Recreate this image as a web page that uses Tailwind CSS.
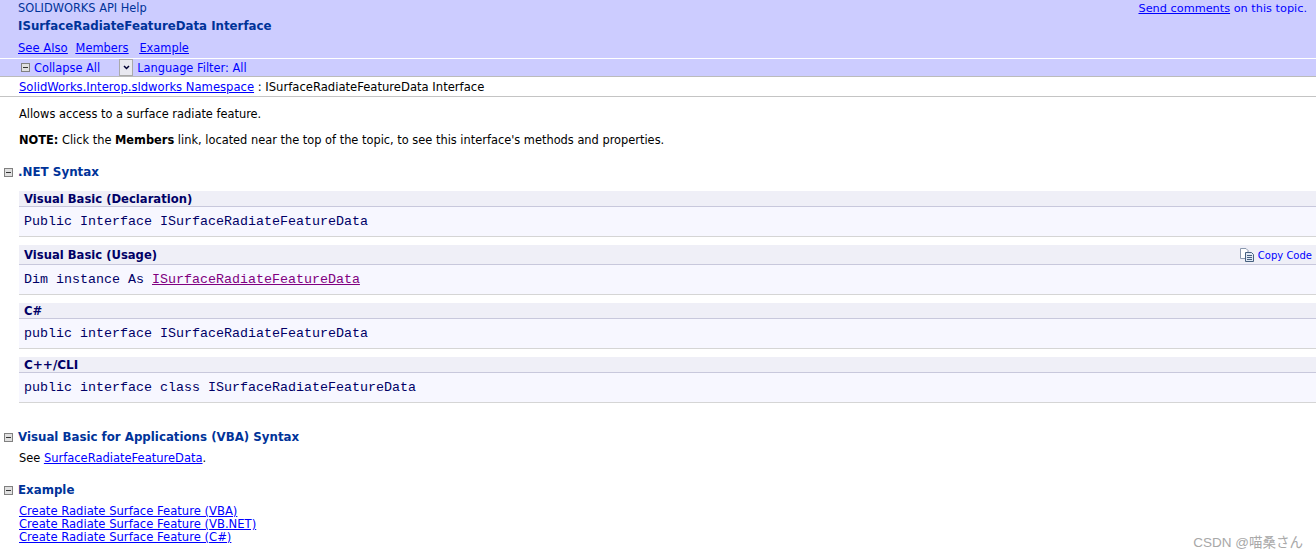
<!DOCTYPE html>
<html lang="en">
<head>
  <meta charset="UTF-8">
  <title>ISurfaceRadiateFeatureData Interface</title>
  <script src="https://cdn.jsdelivr.net/npm/@tailwindcss/browser@4"></script>
</head>
<body class="relative h-[560px] overflow-hidden bg-white font-['DejaVu_Sans',sans-serif] text-[11.4px] leading-[13px] text-black">
  <!-- header -->
  <div class="relative h-[58px] bg-[#ccccff] pl-[18px] pt-[2px]">
    <div class="text-[#003399] text-[11.4px] h-[13px]">SOLIDWORKS API Help</div>
    <div class="mt-[3px] h-[16px] font-bold text-[#003399] text-[11.8px] leading-[16px]">ISurfaceRadiateFeatureData Interface</div>
    <div class="mt-[8px] flex text-[#0000ff] underline">
      <a class="underline text-[11.6px]">See Also</a>
      <a class="underline ml-[8px]">Members</a>
      <a class="underline ml-[11px]">Example</a>
    </div>
    <div class="absolute right-[9px] top-[2px] text-[#0000ff] text-[11.3px]"><a class="underline">Send comments</a> on this topic.</div>
  </div>
  <!-- filter bar -->
  <div class="mt-px flex h-[18px] items-center border-b border-[#bbbbbb] bg-[#ccccff] pl-[21px] pt-[2px] text-[#0000ff]">
    <svg width="9" height="9" viewBox="0 0 9 9" class="mr-[4px] -mt-[2px]"><rect x="0.5" y="0.5" width="8" height="8" fill="#e0e0e0" stroke="#808080"/><path d="M2 4.5H7" stroke="#333333"/></svg>
    <span>Collapse All</span>
    <span class="ml-[19px] mr-[4px] -mt-[2px] flex h-[17px] w-[14px] items-center justify-center border border-[#aaaaaa] bg-[#e8e8f0]">
      <svg width="7" height="5" viewBox="0 0 7 5"><path d="M1 1L3.5 3.5L6 1" fill="none" stroke="#000033" stroke-width="1.5"/></svg>
    </span>
    <span>Language Filter: All</span>
  </div>
  <!-- breadcrumb -->
  <div class="flex h-[20px] items-center border-b border-[#c4c4c4] pl-[19px] pt-[2px] text-[11.6px]">
    <a class="text-[#0000ff] underline">SolidWorks.Interop.sldworks Namespace</a><span class="whitespace-pre"> : ISurfaceRadiateFeatureData Interface</span>
  </div>

  <div class="pl-[19px] pt-[11px]">
    <p class="h-[13px]">Allows access to a surface radiate feature.</p>
    <p class="mt-[13px] h-[13px]"><b>NOTE:</b> Click the <b>Members</b> link, located near the top of the topic, to see this interface's methods and properties.</p>
  </div>

  <!-- .NET syntax -->
  <div class="mt-[17px] flex h-[16px] items-center pl-[4px] font-bold text-[11.9px] text-[#003399]">
    <svg width="9" height="9" viewBox="0 0 9 9" class="mr-[5px]"><rect x="0.5" y="0.5" width="8" height="8" fill="#e0e0e0" stroke="#808080"/><path d="M2 4.5H7" stroke="#333333"/></svg>
    <span>.NET Syntax</span>
  </div>

  <div class="ml-[19px] mt-[11px]">
    <div class="flex h-[16px] items-center border-b border-[#c8c8dc] bg-[#efeff7] pl-[5px] pt-[2px] font-bold text-[11.6px] text-[#000066]">Visual Basic (Declaration)</div>
    <div class="flex h-[30px] items-center border-b border-[#d5d5d5] bg-[#f7f7ff] pl-[5px] font-['Liberation_Mono',monospace] text-[13.333px] text-[#000066]">Public Interface ISurfaceRadiateFeatureData</div>

    <div class="mt-[8px] flex h-[20px] items-center justify-between border-b border-[#c8c8dc] bg-[#efeff7] pl-[5px] pr-[4px] pt-[2px] font-bold text-[11.6px] text-[#000066]">
      <span>Visual Basic (Usage)</span>
      <span class="flex items-center font-normal text-[10px] text-[#0000ff]">
        <svg width="16" height="14" viewBox="0 0 16 14" class="mr-[3px] -mt-[2px]">
          <path d="M1.5 0.5H7L9 2.5V10.5H1.5Z" fill="#ffffff" stroke="#8a98ae"/>
          <path d="M6.5 4.5H12.5L14.5 6.5V13.5H6.5Z" fill="#dfe8f4" stroke="#47607f"/>
          <path d="M8 7.5H13M8 9.5H13M8 11.5H13" stroke="#47607f"/>
        </svg>
        Copy Code
      </span>
    </div>
    <div class="flex h-[30px] items-center border-b border-[#d5d5d5] bg-[#f7f7ff] pl-[5px] font-['Liberation_Mono',monospace] text-[13.333px] text-[#000066] whitespace-pre">Dim instance As <a class="text-[#800080] underline">ISurfaceRadiateFeatureData</a></div>

    <div class="mt-[8px] flex h-[16px] items-center border-b border-[#c8c8dc] bg-[#efeff7] pl-[5px] pt-[2px] font-bold text-[11.6px] text-[#000066]">C#</div>
    <div class="flex h-[30px] items-center border-b border-[#d5d5d5] bg-[#f7f7ff] pl-[5px] font-['Liberation_Mono',monospace] text-[13.333px] text-[#000066]">public interface ISurfaceRadiateFeatureData</div>

    <div class="mt-[8px] flex h-[16px] items-center border-b border-[#c8c8dc] bg-[#efeff7] pl-[5px] pt-[2px] font-bold text-[12px] text-[#000066]">C++/CLI</div>
    <div class="flex h-[30px] items-center border-b border-[#d5d5d5] bg-[#f7f7ff] pl-[5px] font-['Liberation_Mono',monospace] text-[13.333px] text-[#000066]">public interface class ISurfaceRadiateFeatureData</div>
  </div>

  <!-- VBA -->
  <div class="mt-[26px] flex h-[16px] items-center pl-[4px] font-bold text-[11.8px] text-[#003399]">
    <svg width="9" height="9" viewBox="0 0 9 9" class="mr-[5px]"><rect x="0.5" y="0.5" width="8" height="8" fill="#e0e0e0" stroke="#808080"/><path d="M2 4.5H7" stroke="#333333"/></svg>
    <span>Visual Basic for Applications (VBA) Syntax</span>
  </div>
  <p class="mt-[7px] h-[13px] pl-[19px]">See <a class="text-[#0000ff] underline text-[11.5px]">SurfaceRadiateFeatureData</a>.</p>

  <!-- Example -->
  <div class="mt-[17px] flex h-[16px] items-center pl-[4px] font-bold text-[11.8px] text-[#003399]">
    <svg width="9" height="9" viewBox="0 0 9 9" class="mr-[5px]"><rect x="0.5" y="0.5" width="8" height="8" fill="#e0e0e0" stroke="#808080"/><path d="M2 4.5H7" stroke="#333333"/></svg>
    <span>Example</span>
  </div>
  <div class="mt-[7px] flex flex-col items-start pl-[19px] text-[11.6px] text-[#0000ff]">
    <a class="underline">Create Radiate Surface Feature (VBA)</a>
    <a class="underline">Create Radiate Surface Feature (VB.NET)</a>
    <a class="underline">Create Radiate Surface Feature (C#)</a>
  </div>

  <div class="absolute bottom-[9px] right-[13px] font-['Liberation_Sans','Noto_Sans_CJK_JP',sans-serif] text-[13.5px] leading-[16px] text-[#a8a8a8]">CSDN @喵桑さん</div>
</body>
</html>
